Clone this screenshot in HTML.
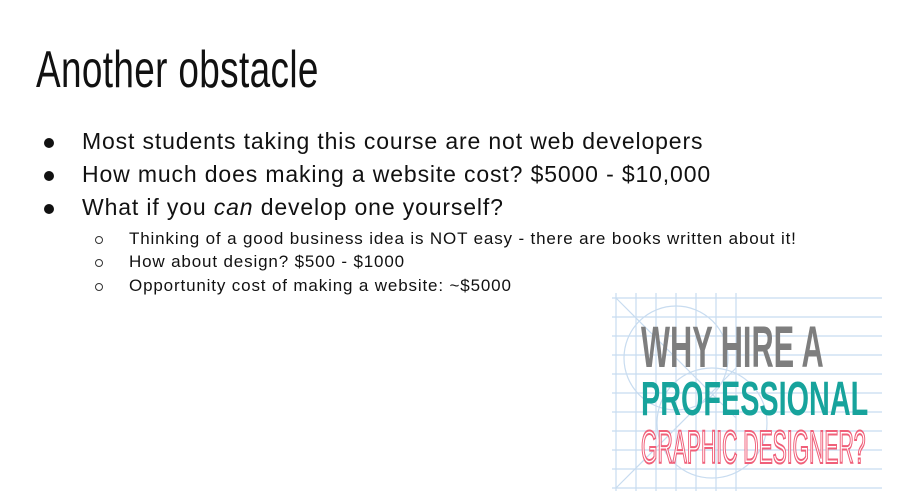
<!DOCTYPE html>
<html><head><meta charset="utf-8"><style>
body{margin:0;width:922px;height:502px;background:#fff;overflow:hidden;position:relative;font-family:"Liberation Sans",sans-serif;color:#111}
.t{position:absolute;left:36px;top:40px;font-size:52px;transform:scaleX(0.71);transform-origin:left top;white-space:nowrap;letter-spacing:0.5px}
.b{position:absolute;left:82px;font-size:23px;white-space:nowrap;letter-spacing:0.86px}
.bd{position:absolute;left:44px;width:10px;height:10px;border-radius:50%;background:#111}
.s{position:absolute;left:129px;font-size:17px;white-space:nowrap;letter-spacing:0.85px}
.sd{position:absolute;left:95px;width:6px;height:6px;border-radius:50%;border:1px solid #333}
.img{position:absolute;left:612px;top:293px;width:270px;height:198px}
.w{position:absolute;font-family:"Liberation Sans Narrow","Liberation Sans",sans-serif;font-weight:bold;white-space:nowrap;transform-origin:left top}
</style></head><body>
<div class="t">Another obstacle</div>
<div class="bd" style="top:138px"></div><div class="b" style="top:128px">Most students taking this course are not web developers</div>
<div class="bd" style="top:171px"></div><div class="b" style="top:161px">How much does making a website cost? $5000 - $10,000</div>
<div class="bd" style="top:204px"></div><div class="b" style="top:194px">What if you <i>can</i> develop one yourself?</div>
<div class="sd" style="top:236px"></div><div class="s" style="top:229px">Thinking of a good business idea is NOT easy - there are books written about it!</div>
<div class="sd" style="top:259px"></div><div class="s" style="top:252px">How about design? $500 - $1000</div>
<div class="sd" style="top:283px"></div><div class="s" style="top:276px">Opportunity cost of making a website: ~$5000</div>
<svg class="img" viewBox="0 0 270 198">
<g stroke="#c8dcf0" stroke-width="1.2" fill="none">
<path d="M0 5H270M0 24H270M0 43H270M0 62H270M0 81H270M0 100H270M0 119H270M0 138H270M0 157H270M0 176H270M0 195H270"/>
<path d="M4 0V198M24 0V198M44 0V198M64 0V198M84 0V198M104 0V198M124 0V198"/>
<path d="M4 5L124 125M4 195L124 75"/>
<circle cx="64" cy="65" r="52"/><circle cx="100" cy="130" r="55"/>
</g>
</svg>
<div class="w" style="left:641px;top:314px;font-size:58px;color:#7e7e7e;transform:scaleX(0.53)">WHY HIRE A</div>
<div class="w" style="left:641px;top:372px;font-size:48px;color:#17a39c;transform:scaleX(0.6)">PROFESSIONAL</div>
<div class="w" style="left:641px;top:420px;font-size:46px;color:#fff;-webkit-text-stroke:2px #f0607a;font-weight:normal;transform:scaleX(0.46)">GRAPHIC DESIGNER?</div>
</body></html>
